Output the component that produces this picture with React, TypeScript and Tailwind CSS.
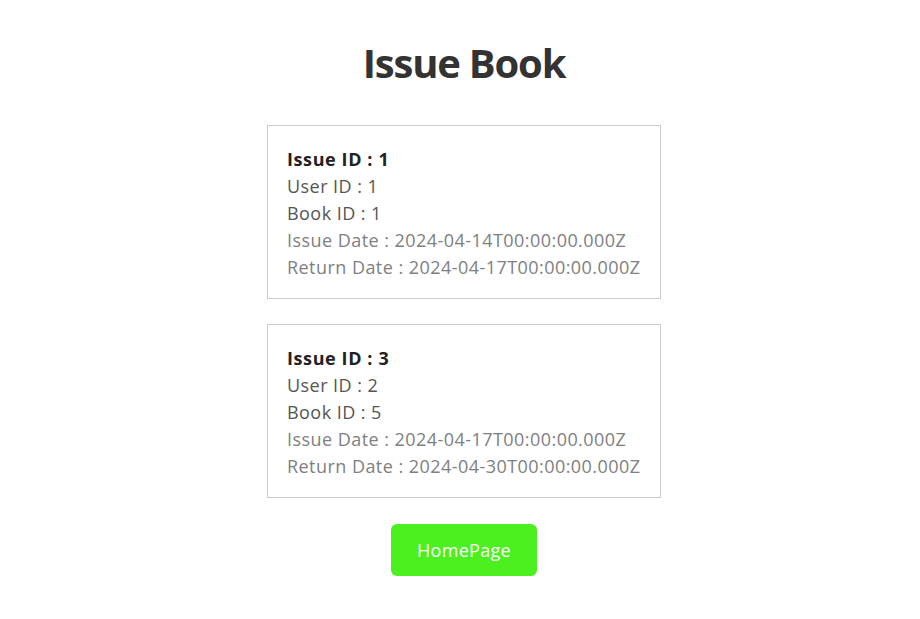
const issues = [
  { id: 1, userId: 1, bookId: 1, issueDate: '2024-04-14T00:00:00.000Z', returnDate: '2024-04-17T00:00:00.000Z' },
  { id: 3, userId: 2, bookId: 5, issueDate: '2024-04-17T00:00:00.000Z', returnDate: '2024-04-30T00:00:00.000Z' },
];

export default function App() {
  return (
    <div className="min-h-[619px] bg-white flex flex-col items-center pt-[38px] pl-[8px] font-['Open_Sans','Noto_Sans',sans-serif]">
      <h1 className="text-[40px] leading-[50px] font-bold text-[#333] tracking-[-1.2px]">Issue Book</h1>
      <ul className="flex flex-col gap-[25px] mt-[37px]">
        {issues.map((item) => (
          <li
            key={item.id}
            className="w-[394px] border border-[#ccc] px-[19px] pt-[20px] pb-[17px] text-[18px] leading-[27px] tracking-[0.45px] whitespace-nowrap"
          >
            <p className="font-bold text-[#222] tracking-[0.6px]">Issue ID : {item.id}</p>
            <p className="text-[#555]">User ID : {item.userId}</p>
            <p className="text-[#555]">Book ID : {item.bookId}</p>
            <p className="text-[#808080]">Issue Date : {item.issueDate}</p>
            <p className="text-[#808080]">Return Date : {item.returnDate}</p>
          </li>
        ))}
      </ul>
      <button className="mt-[26px] w-[146px] h-[52px] rounded-[6px] bg-[#4cf01f] text-white text-[18px] tracking-[0.3px]">
        HomePage
      </button>
    </div>
  );
}
